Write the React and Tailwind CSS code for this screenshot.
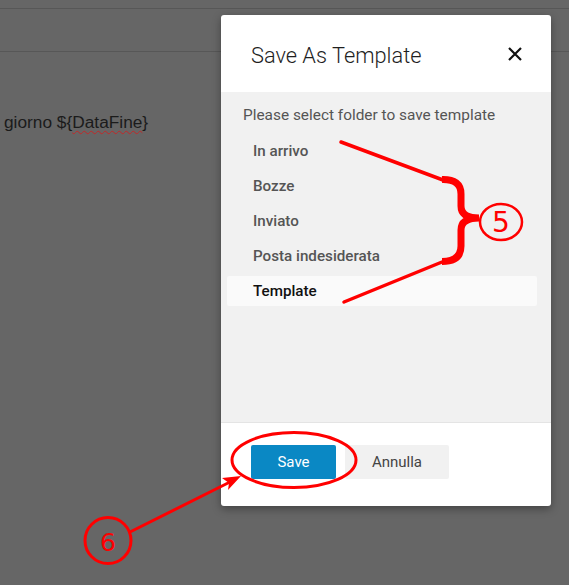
import React from "react";

const folders = ["In arrivo", "Bozze", "Inviato", "Posta indesiderata", "Template"];

function Annotations() {
  return (
    <svg className="absolute inset-0 pointer-events-none" width="569" height="585" viewBox="0 0 569 585">
      <g stroke="#ff0000" fill="none" strokeLinecap="round">
        <line x1="341" y1="142" x2="443" y2="180" strokeWidth="3.5" />
        <line x1="344" y1="302" x2="442" y2="262" strokeWidth="3.5" />
        <path
          d="M442 179.5 Q461 179 461 194 L461 206 Q461 218 479 218 M479 218 Q461 218 461 230 L461 246 Q461 261.5 442 261.5"
          strokeWidth="7"
          strokeLinecap="butt"
        />
        <ellipse cx="501" cy="222" rx="21" ry="18" strokeWidth="2.5" />
        <ellipse cx="294" cy="460" rx="62" ry="27.5" strokeWidth="3" />
        <circle cx="108" cy="540.5" r="23" strokeWidth="3" />
        <line x1="130" y1="532" x2="232" y2="481" strokeWidth="3" />
      </g>
      <polygon points="241,476 222,478 229,483 228,490" fill="#ff0000" />
      <text x="501" y="232" textAnchor="middle" fill="#ff0000" fontSize="28" fontFamily="DejaVu Sans, sans-serif">
        5
      </text>
      <text x="108" y="551" textAnchor="middle" fill="#ff0000" fontSize="25" fontFamily="DejaVu Sans, sans-serif">
        6
      </text>
    </svg>
  );
}

export default function App() {
  return (
    <div className="relative w-[569px] h-[585px] overflow-hidden bg-[#666666]">
      {/* dimmed page behind the dialog */}
      <div className="h-[9px] border-b border-[#575757]" />
      <div className="h-[43px] border-b border-[#575757]" />
      <div className="pl-[4px] pt-[60px] text-[17.3px] leading-[20px] text-[#1b1b1b] font-['Liberation_Sans',Arial,sans-serif]">
        giorno ${"{"}
        <span className="underline decoration-wavy decoration-[#c02828] decoration-1 underline-offset-2">DataFine</span>
        {"}"}
      </div>

      {/* dialog */}
      <div className="absolute left-[221px] top-[15px] w-[330px] h-[491px] bg-white rounded-[3px] shadow-[0_3px_8px_rgba(0,0,0,0.35)] flex flex-col overflow-hidden font-['Roboto',sans-serif]">
        <div className="h-[77px] flex items-center justify-between pl-[30px] pr-[29px]">
          <h2 className="pt-[5px] text-[21.8px] font-light text-[#1f1f1f]">Save As Template</h2>
          <svg width="14" height="14" viewBox="0 0 14 14">
            <path d="M1 1 L13 13 M13 1 L1 13" stroke="#111" strokeWidth="2.2" />
          </svg>
        </div>

        <div className="h-[330px] bg-[#f1f1f1] pt-[14px] pl-[6px] pr-[14px]">
          <p className="pl-[16px] text-[15.4px] leading-[18px] text-[#555]">Please select folder to save template</p>
          <div className="mt-[12px] flex flex-col gap-[5px]">
            {folders.map((f) => (
              <div
                key={f}
                className={
                  f === "Template"
                    ? "h-[30px] flex items-center pl-[26px] rounded-[2px] bg-[#fafafa] text-[15.2px] font-medium text-[#111]"
                    : "h-[30px] flex items-center pl-[26px] text-[15.2px] font-medium text-[#555]"
                }
              >
                {f}
              </div>
            ))}
          </div>
        </div>

        <div className="flex-1 border-t border-[#e4e4e4] pt-[22px] pl-[30px] flex gap-[9px] items-start">
          <button className="w-[85px] h-[34px] rounded-[2px] bg-[#0a88c4] text-white text-[15px]">Save</button>
          <button className="w-[104px] h-[34px] rounded-[2px] bg-[#f1f1f1] text-[#444] text-[15px]">Annulla</button>
        </div>
      </div>

      <Annotations />
    </div>
  );
}
